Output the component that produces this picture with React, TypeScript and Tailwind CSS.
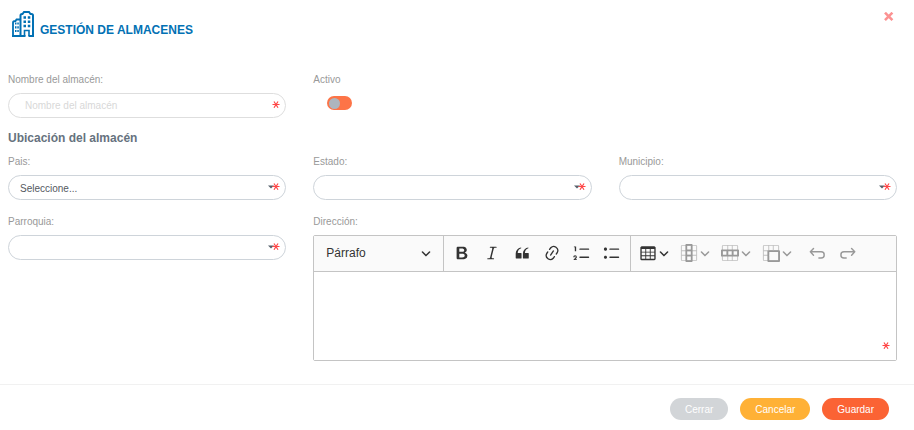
import React from "react";

function BuildingIcon() {
  return (
    <svg viewBox="0 0 24 28" className="h-7 w-6" fill="none" stroke="#0271b4" aria-hidden="true">
      <path d="M9.500 26V5.500Q9.500 4 11 4H11.500L13 2H18L19.500 4H20.500Q22 4 22 5.500V26" strokeWidth="2" />
      <path d="M9 9.500H5.500L4.500 11Q2 11 2 12.500V26" strokeWidth="1.800" />
      <path d="M1 26H14.500M17.500 26H23" strokeWidth="2" />
      <path d="M13.500 26V20.500H18V26" strokeWidth="1.600" />
      <path d="M12.500 7.500H15M16.800 7.500H19.300M12.500 11.700H15M16.800 11.700H19.300M12.500 16H15M16.800 16H19.300" strokeWidth="2.600" />
      <path d="M4 13.500H5.500M6.300 13.500H7.800M4 17.300H5.500M6.300 17.300H7.800M4 21H5.500M6.300 21H7.800" strokeWidth="2.200" />
    </svg>
  );
}

const FRAME =
  "M2.500 1h15A1.500 1.500 0 0 1 19 2.500v15a1.500 1.500 0 0 1-1.500 1.500h-15A1.500 1.500 0 0 1 1 17.500v-15A1.500 1.500 0 0 1 2.500 1zM2 2v16h16V2H2z";

const ICONS = {
  bold: "M10.187 17H5.773c-.637 0-1.092-.138-1.364-.415-.273-.277-.409-.718-.409-1.323V4.738c0-.617.14-1.062.419-1.332.279-.27.73-.406 1.354-.406h4.68c.69 0 1.288.041 1.793.124.506.083.96.242 1.36.478.341.197.644.447.906.75a3.262 3.262 0 0 1 .808 2.162c0 1.401-.722 2.426-2.167 3.075C15.050 10.175 16 11.315 16 13.010a3.756 3.756 0 0 1-2.296 3.504 6.100 6.100 0 0 1-1.517.377c-.571.073-1.238.11-2 .11zm-.217-6.217H7v4.087h3.069c1.977 0 2.965-.69 2.965-2.072 0-.707-.256-1.220-.768-1.537-.512-.319-1.277-.478-2.296-.478zM7 5.130v3.619h2.606c.729 0 1.292-.067 1.690-.2a1.600 1.600 0 0 0 .91-.765c.165-.267.247-.566.247-.897 0-.707-.26-1.176-.778-1.409-.519-.232-1.310-.348-2.375-.348H7z",
  italic: "m9.586 14.633.021.004c-.036.335.095.655.393.962.082.083.173.15.274.201h1.474a.6.6 0 1 1 0 1.200H5.304a.6.6 0 0 1 0-1.200h1.150c.474-.07.809-.182 1.005-.334.157-.122.291-.32.404-.597l2.416-9.550a1.053 1.053 0 0 0-.281-.823 1.120 1.120 0 0 0-.442-.296H8.150a.6.6 0 0 1 0-1.200h6.443a.6.6 0 1 1 0 1.200h-1.195c-.376.056-.65.155-.823.296-.215.175-.423.439-.623.79l-2.366 9.347z",
  quote: "M3 10.423a6.500 6.500 0 0 1 6.056-6.408l.038.67C6.448 5.423 5.354 7.663 5.220 10H9c.552 0 .5.432.5.986v4.511c0 .554-.448.503-1 .503h-5c-.552 0-.5-.449-.5-1.003v-4.574zm8 0a6.500 6.500 0 0 1 6.056-6.408l.038.67c-2.646.739-3.740 2.979-3.873 5.315H17c.552 0 .5.432.5.986v4.511c0 .554-.448.503-1 .503h-5c-.552 0-.5-.449-.5-1.003v-4.574z",
  link: "m11.077 15 .991-1.416a.75.75 0 1 1 1.229.86l-1.148 1.640a.748.748 0 0 1-.217.206 5.251 5.251 0 0 1-8.503-5.955.741.741 0 0 1 .12-.274l1.147-1.639a.75.75 0 1 1 1.228.86L4.933 10.700l.006.003a3.750 3.750 0 0 0 6.132 4.294l.006.004zm5.494-5.335a.748.748 0 0 1-.12.274l-1.147 1.639a.75.75 0 1 1-1.228-.86l.86-1.230a3.750 3.750 0 0 0-6.144-4.301l-.86 1.229a.75.75 0 0 1-1.229-.86l1.148-1.640a.748.748 0 0 1 .217-.206 5.251 5.251 0 0 1 8.503 5.955zm-4.563-2.532a.75.75 0 0 1 .184 1.045l-3.155 4.505a.75.75 0 1 1-1.229-.86l3.155-4.506a.75.75 0 0 1 1.045-.184z",
  numbered: "M7 5.750c0 .414.336.75.75.75h9.500a.75.75 0 1 0 0-1.500h-9.500a.75.75 0 0 0-.75.75zM3.500 3v5H2V3.700H1v-1h2.500V3zM.343 17.857l2.590-3.257H2.920a.6.6 0 1 0-1.040 0H.302a2 2 0 1 1 3.995 0h-.001c-.048.405-.16.734-.333.988-.175.254-.59.692-1.244 1.312H4.300v1h-4l.043-.043zM7 14.750a.75.75 0 0 1 .75-.75h9.500a.75.75 0 1 1 0 1.500h-9.500a.75.75 0 0 1-.75-.75z",
  bulleted: "M7 5.750c0 .414.336.75.75.75h9.500a.75.75 0 1 0 0-1.500h-9.500a.75.75 0 0 0-.75.75zm-6 0C1 4.784 1.777 4 2.750 4c.966 0 1.750.777 1.750 1.750 0 .966-.777 1.750-1.750 1.750C1.784 7.500 1 6.723 1 5.750zm6 9c0 .414.336.75.75.75h9.500a.75.75 0 1 0 0-1.500h-9.500a.75.75 0 0 0-.75.75zm-6 0c0-.966.777-1.750 1.750-1.750.966 0 1.750.777 1.750 1.750 0 .966-.777 1.750-1.750 1.750-.966 0-1.750-.777-1.750-1.750z",
  table: "M3 5.500v3h4v-3H3zm0 4v3h4v-3H3zm0 4v3h4v-3H3zm5 3h4v-3H8v3zm5 0h4v-3h-4v3zm4-4v-3h-4v3h4zm0-4v-3h-4v3h4zm1.500 8a1.500 1.500 0 0 1-1.500 1.500H3A1.500 1.500 0 0 1 1.500 17V4c.222-.863 1.068-1.500 2-1.500h13c.932 0 1.778.637 2 1.500v13zM12 12.500v-3H8v3h4zm0-4v-3H8v3h4z",
  column: "M14 1v18a1 1 0 0 1-1 1H7a1 1 0 0 1-1-1V1a1 1 0 0 1 1-1h6a1 1 0 0 1 1 1zm-2 1H8v4h4V2zm0 6H8v4h4V8zm0 6H8v4h4v-4z",
  row: "M1 6h18a1 1 0 0 1 1 1v6a1 1 0 0 1-1 1H1a1 1 0 0 1-1-1V7a1 1 0 0 1 1-1zm1 2v4h4V8H2zm6 0v4h4V8H8zm6 0v4h4V8h-4z",
  merge: "M7 7h12a1 1 0 0 1 1 1v11a1 1 0 0 1-1 1H7a1 1 0 0 1-1-1V8a1 1 0 0 1 1-1zm1 2v9h10V9H8z",
};

function Icon({ d, grid }: { d: string; grid?: string }) {
  return (
    <svg viewBox="0 0 20 20" className="size-[18px] shrink-0" fill="currentColor" fillRule="evenodd" aria-hidden="true">
      {grid && <path d={FRAME + grid} opacity="0.6" />}
      <path d={d} />
    </svg>
  );
}

function HistoryButton({ label, d }: { label: string; d: string }) {
  return (
    <button type="button" disabled aria-label={label} className="flex h-[30px] w-[30px] shrink-0 items-center justify-center text-[#999]">
      <svg viewBox="0 0 20 20" className="size-[18px]" fill="none" stroke="currentColor" strokeWidth="1.600" strokeLinecap="round" strokeLinejoin="round" aria-hidden="true">
        <path d={d} />
      </svg>
    </button>
  );
}

function Chevron() {
  return (
    <svg viewBox="0 0 10 10" className="size-[10px] shrink-0" fill="currentColor" aria-hidden="true">
      <path d="M.941 4.523a.75.75 0 1 1 1.060-1.060l3.006 3.005 3.005-3.005a.75.75 0 1 1 1.060 1.060l-3.549 3.550a.75.75 0 0 1-1.168-.136L.941 4.523z" />
    </svg>
  );
}

function RequiredMark() {
  return (
    <svg viewBox="0 0 8 8" className="size-2" fill="none" stroke="#ff4646" strokeWidth="1.200" aria-hidden="true">
      <path d="M0.500 3.500H7.500M2 0.500L6 6.800M6 0.500L2 6.800" />
    </svg>
  );
}

const labelClass = "block text-[10px] leading-[15px] text-[#999]";

function SelectField({ id, label, placeholder }: { id: string; label: string; placeholder?: string }) {
  return (
    <div>
      <label htmlFor={id} className={labelClass}>{label}</label>
      <div className="relative mt-1.5">
        <select id={id} required className="block h-[25px] w-full appearance-none rounded-full border border-[#ced4da] bg-white px-[11px] pt-0.5 text-[10px] text-[#55595f]">
          <option>{placeholder ?? ""}</option>
        </select>
        <span className="pointer-events-none absolute right-1.5 top-2 flex items-center">
          <svg viewBox="0 0 6 4" className="-mr-0.5 h-1 w-1.5" fill="#56606b" aria-hidden="true">
            <path d="M0 0.500H6L3 3.500Z" />
          </svg>
          <RequiredMark />
        </span>
      </div>
    </div>
  );
}

function ToolButton({ label, d }: { label: string; d: string }) {
  return (
    <button type="button" aria-label={label} className="flex h-[30px] w-[30px] shrink-0 items-center justify-center">
      <Icon d={d} />
    </button>
  );
}

function MenuButton({ label, d, grid }: { label: string; d: string; grid?: string }) {
  return (
    <button type="button" aria-label={label} disabled={!!grid} className="flex h-[30px] w-[41px] shrink-0 items-center gap-0.5 disabled:text-[#999]">
      <Icon d={d} grid={grid} />
      <Chevron />
    </button>
  );
}

function Editor() {
  return (
    <div className="mt-1.5 rounded-xs border border-[#c4c4c4]">
      <div role="toolbar" aria-label="Formato" className="flex h-9 items-stretch overflow-hidden border-b border-[#c4c4c4] bg-[#fafafa] text-[#333]">
        <div className="relative flex w-[130px] shrink-0 items-center border-r border-[#c4c4c4] pb-0.5">
          <select aria-label="Encabezado" className="h-full w-full appearance-none pl-3 text-xs">
            <option>Párrafo</option>
          </select>
          <span className="pointer-events-none absolute right-3">
            <Chevron />
          </span>
        </div>
        <div className="flex shrink-0 items-center border-r border-[#c4c4c4] px-[3px] pb-0.5">
          <ToolButton label="Negrita" d={ICONS.bold} />
          <ToolButton label="Cursiva" d={ICONS.italic} />
          <ToolButton label="Cita" d={ICONS.quote} />
          <ToolButton label="Enlace" d={ICONS.link} />
          <ToolButton label="Lista numerada" d={ICONS.numbered} />
          <ToolButton label="Lista de puntos" d={ICONS.bulleted} />
        </div>
        <div className="flex items-center pb-0.5 pl-2">
          <MenuButton label="Insertar tabla" d={ICONS.table} />
          <MenuButton label="Columna" d={ICONS.column} grid="M18 7v1H2V7h16zm0 5v1H2v-1h16z" />
          <MenuButton label="Fila" d={ICONS.row} grid="M7 2h1v16H7V2zm5 0h1v16h-1V2z" />
          <MenuButton label="Combinar celdas" d={ICONS.merge} grid="M7 2h1v16H7V2zm5 0h1v7h-1V2zm6 5v1H2V7h16zM8 12v1H2v-1h6z" />
          <HistoryButton label="Deshacer" d="M5 5L1.500 8.700L5 12.400M1.500 8.700H13.500A3.400 3.400 0 0 1 13.500 15.500H11" />
          <HistoryButton label="Rehacer" d="M14 5L17.500 8.700L14 12.400M17.500 8.700H5.500A3.400 3.400 0 0 0 5.500 15.500H8" />
        </div>
      </div>
      <div className="relative">
        <textarea id="direccion" required className="block h-[88px] w-full resize-none bg-white p-2 text-xs outline-none" />
        <span className="pointer-events-none absolute bottom-2.5 right-1.5">
          <RequiredMark />
        </span>
      </div>
    </div>
  );
}

export default function App() {
  return (
    <div className="bg-white font-['Liberation_Sans',Arial,sans-serif]">
      <header className="flex items-start justify-between pl-[11px] pr-5 pt-2.5">
        <div className="flex gap-[5px]">
          <BuildingIcon />
          <h1 className="pt-3 text-xs leading-4 font-bold text-[#0271b4]">GESTIÓN DE ALMACENES</h1>
        </div>
        <button type="button" aria-label="Cerrar ventana" className="pt-0.5">
          <svg viewBox="0 0 10 10" className="size-[10px]" stroke="#fb9292" strokeWidth="2.600" aria-hidden="true">
            <path d="M1 0.700L8.400 8.100M8.400 0.700L1 8.100" />
          </svg>
        </button>
      </header>

      <form>
        <div className="pb-[23px] pl-2 pr-[17px] pt-[34px]">
          <div className="grid grid-cols-3 gap-x-[27px]">
            <div>
              <label htmlFor="nombre" className={labelClass}>Nombre del almacén:</label>
              <div className="relative mt-1.5">
                <input id="nombre" type="text" required placeholder="Nombre del almacén" className="block h-[25px] w-full rounded-full border border-[#dedede] bg-white px-4 text-[10px] placeholder:text-[#d8d8d8]" />
                <span className="pointer-events-none absolute right-1.5 top-2">
                  <RequiredMark />
                </span>
              </div>
            </div>
            <div>
              <label htmlFor="activo" className={labelClass}>Activo</label>
              <input id="activo" type="checkbox" role="switch" className="ml-3.5 mt-[9px] flex h-3.5 w-[25px] appearance-none items-center rounded-full bg-[#fd7447] px-0.5 before:size-[11px] before:rounded-full before:bg-[#adb5bd]" />
            </div>
          </div>

          <h2 className="mb-[7px] mt-[11px] text-xs leading-[18px] font-bold text-[#66727e]">Ubicación del almacén</h2>

          <div className="grid grid-cols-3 gap-x-[27px] gap-y-3.5">
            <SelectField id="pais" label="Pais:" placeholder="Seleccione..." />
            <SelectField id="estado" label="Estado:" />
            <SelectField id="municipio" label="Municipio:" />
            <SelectField id="parroquia" label="Parroquia:" />
            <div className="col-span-2">
              <label htmlFor="direccion" className={labelClass}>Dirección:</label>
              <Editor />
            </div>
          </div>
        </div>

        <footer className="flex justify-end gap-3 border-t border-[#f1f1f1] pb-2.5 pl-2 pr-[25px] pt-[13px] text-[10px] leading-[22px] text-white">
          <button type="button" className="h-[22px] rounded-full bg-[#d2d5d8] px-[15px] pt-px">Cerrar</button>
          <button type="button" className="h-[22px] rounded-full bg-[#ffb136] px-[15px] pt-px">Cancelar</button>
          <button type="submit" className="h-[22px] rounded-full bg-[#fb6334] px-[15px] pt-px">Guardar</button>
        </footer>
      </form>
    </div>
  );
}
